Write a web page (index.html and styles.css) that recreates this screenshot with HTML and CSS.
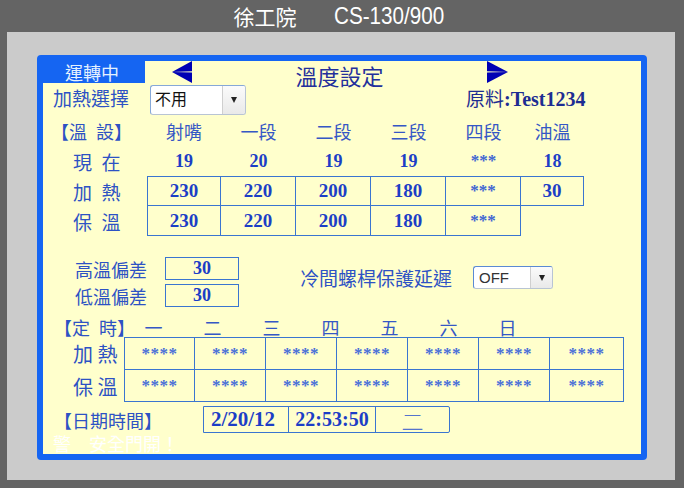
FILE: index.html
```html
<!DOCTYPE html>
<html lang="zh-Hant">
<head>
<meta charset="utf-8">
<title>溫度設定</title>
<link rel="stylesheet" href="styles.css">
</head>
<body>
<header class="titlebar"><span class="t-cn">徐工院</span><span class="t-en">CS-130/900</span></header>
<div class="panel">
  <div class="frame">
    <div class="toprow">
      <div class="tab">運轉中</div>
      <svg class="arrow arrow-left" viewBox="0 0 20 22" aria-hidden="true"><polygon points="0,11 20,0 20,10.2"/><polygon points="0,11 20,11.6 20,22"/></svg>
      <div class="pagetitle">溫度設定</div>
      <svg class="arrow arrow-right" viewBox="0 0 21 22" aria-hidden="true"><polygon points="21,11 0,0 0,10.2"/><polygon points="21,11 0,11.6 0,22"/></svg>
    </div>
    <div class="selrow">
      <div class="sellabel">加熱選擇</div>
      <div class="select sel-heat"><span class="sel-val">不用</span><span class="sel-btn"></span></div>
      <div class="material"><span class="mat-label">原料</span><span class="mat-val">:Test1234</span></div>
    </div>
    <div class="temp-grid">
      <div class="sec-label">【溫&ensp;設】</div>
      <div class="colhead">射嘴</div>
      <div class="colhead">一段</div>
      <div class="colhead">二段</div>
      <div class="colhead">三段</div>
      <div class="colhead">四段</div>
      <div class="colhead">油溫</div>

      <div class="rowlabel">現&ensp;在</div>
      <div class="cur">19</div>
      <div class="cur">20</div>
      <div class="cur">19</div>
      <div class="cur">19</div>
      <div class="cur stars">***</div>
      <div class="cur">18</div>

      <div class="rowlabel">加&ensp;熱</div>
      <div class="cell top first">230</div>
      <div class="cell top">220</div>
      <div class="cell top">200</div>
      <div class="cell top">180</div>
      <div class="cell top stars">***</div>
      <div class="cell top">30</div>

      <div class="rowlabel">保&ensp;溫</div>
      <div class="cell first">230</div>
      <div class="cell">220</div>
      <div class="cell">200</div>
      <div class="cell">180</div>
      <div class="cell stars">***</div>
    </div>

    <div class="dev">
      <div class="dev-left">
        <div class="dev-row"><span class="dev-label">高溫偏差</span><span class="dev-box">30</span></div>
        <div class="dev-row"><span class="dev-label">低溫偏差</span><span class="dev-box">30</span></div>
      </div>
      <div class="dev-right">
        <span class="cold-label">冷間螺桿保護延遲</span>
        <div class="select sel-off"><span class="sel-val">OFF</span><span class="sel-btn"></span></div>
      </div>
    </div>

    <div class="timer-head">
      <div class="sec-label">【定&ensp;時】</div>
      <div class="day">一</div>
      <div class="day">二</div>
      <div class="day">三</div>
      <div class="day">四</div>
      <div class="day">五</div>
      <div class="day">六</div>
      <div class="day">日</div>
    </div>
    <div class="timer-grid">
      <div class="trowlabel">加 熱</div>
      <div class="cell top first tstars">****</div>
      <div class="cell top tstars">****</div>
      <div class="cell top tstars">****</div>
      <div class="cell top tstars">****</div>
      <div class="cell top tstars">****</div>
      <div class="cell top tstars">****</div>
      <div class="cell top tstars">****</div>
      <div class="trowlabel">保 溫</div>
      <div class="cell first tstars">****</div>
      <div class="cell tstars">****</div>
      <div class="cell tstars">****</div>
      <div class="cell tstars">****</div>
      <div class="cell tstars">****</div>
      <div class="cell tstars">****</div>
      <div class="cell tstars">****</div>
    </div>

    <div class="date-row">
      <div class="sec-label date-label">【日期時間】</div>
      <div class="date-box">
        <span class="d d1">2/20/12</span>
        <span class="d d2">22:53:50</span>
        <span class="d d3">二</span>
      </div>
    </div>
    <div class="warn">警　安全門開！</div>
  </div>
</div>
</body>
</html>
```

FILE: styles.css
```css
* { box-sizing: border-box; }
html, body { margin: 0; padding: 0; }
body {
  width: 684px;
  height: 488px;
  overflow: hidden;
  background: #646464;
  font-family: "Noto Sans CJK TC", "Noto Sans", sans-serif;
}

.titlebar {
  height: 32px;
  display: flex;
  justify-content: center;
  align-items: center;
  gap: 38px;
  color: #ffffff;
  padding-left: 12px;
}
.t-cn { font-size: 21px; line-height: 32px; }
.t-en {
  display: inline-block;
  font-family: "Liberation Sans", sans-serif;
  font-size: 24px;
  line-height: 32px;
  transform: scaleX(0.86);
  transform-origin: left center;
}

.panel {
  margin: 0 9px 0 7px;
  height: 448px;
  background: #cbcbcb;
  padding: 23px 0 0 30px;
}
.frame {
  width: 610px;
  height: 405px;
  border: 6px solid #1565f2;
  border-radius: 4px;
  background: #ffffcc;
}

.toprow { display: flex; height: 22px; }
.tab {
  width: 102px;
  height: 22px;
  background: #1565f2;
  color: #e4f1ff;
  font-size: 18px;
  line-height: 22px;
  text-align: center;
  padding-right: 4px;
}
.arrow { height: 22px; fill: #0000b4; flex: none; }
.arrow-left { width: 20px; margin-left: 27px; }
.arrow-right { width: 21px; }
.pagetitle {
  width: 295px;
  height: 22px;
  text-align: center;
  font-size: 22px;
  line-height: 22px;
  padding-top: 3px;
  color: #24309c;
  white-space: nowrap;
}

.selrow { display: flex; height: 33px; }
.sellabel {
  width: 107px;
  padding-left: 10px;
  font-size: 19px;
  line-height: 28px;
  margin-top: 1px;
  color: #2d52c4;
}
.select {
  display: flex;
  background: #ffffff;
  border: 1px solid #86a8d8;
  border-right-color: #b8c4d4;
  border-bottom-color: #b8c4d4;
  border-radius: 3px;
  overflow: hidden;
}
.sel-heat { width: 96px; height: 30px; margin-top: 2px; }
.sel-val {
  flex: 1;
  color: #111111;
  padding-left: 4px;
}
.sel-heat .sel-val { font-size: 16px; line-height: 24px; }
.sel-btn {
  width: 23px;
  border-left: 1px solid #cfcfcf;
  background: linear-gradient(#fbfbfb, #e9e9e9);
  display: flex;
  align-items: center;
  justify-content: center;
}
.sel-btn::after {
  content: "";
  border-left: 3.5px solid transparent;
  border-right: 3.5px solid transparent;
  border-top: 6px solid #222222;
}
.material {
  margin-left: 220px;
  margin-top: 1px;
  line-height: 28px;
  color: #1e2d92;
  white-space: nowrap;
}
.mat-label { font-size: 19px; }
.mat-val {
  font-family: "Liberation Serif", serif;
  font-weight: bold;
  font-size: 20px;
}

.temp-grid {
  display: grid;
  grid-template-columns: 104px 74px 75px 75px 75px 75px 63px;
  grid-template-rows: 30px 30px 30px 30px;
}
.temp-grid > div {
  display: flex;
  align-items: center;
  justify-content: center;
}
.temp-grid > .sec-label { justify-content: flex-start; }
.sec-label {
  font-size: 18px;
  color: #2d52c4;
  white-space: nowrap;
  padding-left: 8px;
}
.colhead { font-size: 18px; color: #3557c5; }
.temp-grid > .rowlabel {
  justify-content: flex-start;
  padding-left: 30px;
  font-size: 19px;
  color: #2d52c4;
}
.cur, .cell, .dev-box, .d {
  font-family: "Liberation Serif", serif;
  font-weight: bold;
  color: #1c3ec6;
}
.cur { font-size: 18px; }
.temp-grid .cell { font-size: 19px; }
.cell {
  border-right: 1px solid #3a75d0;
  border-bottom: 1px solid #3a75d0;
}
.cell.top { border-top: 1px solid #3a75d0; }
.cell.first { border-left: 1px solid #3a75d0; }
.temp-grid .stars { font-size: 17px; color: #4166d2; }

.dev { display: flex; margin-top: 21px; }
.dev-left {
  padding-left: 32px;
  display: flex;
  flex-direction: column;
  gap: 4px;
}
.dev-row { display: flex; align-items: center; height: 23px; }
.dev-label { width: 90px; font-size: 18px; color: #2d52c4; }
.dev-box {
  width: 74px;
  height: 23px;
  border: 1px solid #3a75d0;
  display: flex;
  align-items: center;
  justify-content: center;
  font-size: 18px;
}
.dev-right {
  display: flex;
  align-items: center;
  align-self: flex-start;
  margin-left: 61px;
  margin-top: 9px;
  height: 23px;
}
.cold-label { font-size: 19px; color: #2d52c4; white-space: nowrap; }
.sel-off { width: 80px; height: 23px; margin-left: 21px; border-color: #5b8ad4; border-right-color: #b8c4d4; border-bottom-color: #b8c4d4; }
.sel-off .sel-val {
  font-family: "Liberation Sans", sans-serif;
  font-size: 15px;
  line-height: 21px;
  padding-left: 5px;
  color: #333333;
}
.sel-off .sel-btn { width: 22px; }

.timer-head {
  display: flex;
  align-items: center;
  margin-top: 9px;
  height: 21px;
}
.timer-head .sec-label { width: 81px; padding-left: 11px; }
.day {
  width: 59px;
  text-align: center;
  font-size: 18px;
  color: #3557c5;
}

.timer-grid {
  display: grid;
  grid-template-columns: 81px 71px 71px 71px 71px 71px 71px 74px;
  grid-template-rows: 33px 32px;
}
.timer-grid > div {
  display: flex;
  align-items: center;
  justify-content: center;
}
.timer-grid > .trowlabel {
  justify-content: flex-start;
  padding-left: 30px;
  font-size: 20px;
  color: #2d52c4;
  white-space: nowrap;
}
.tstars { font-size: 17px; color: #4a6fd8; letter-spacing: 0.5px; }

.date-row {
  display: flex;
  align-items: center;
  margin-top: 4px;
  height: 27px;
}
.date-label { width: 160px; padding-left: 11px; }
.date-box {
  display: flex;
  height: 27px;
  border: 1px solid #3a75d0;
  border-radius: 0 2px 2px 0;
}
.d {
  display: flex;
  align-items: center;
  justify-content: center;
  font-size: 20px;
}
.d1 { width: 84px; font-size: 21px; padding-right: 6px; }
.d2 { width: 87px; border-left: 1px solid #3a75d0; }
.d3 {
  width: 74px;
  border-left: 1px solid #3a75d0;
  font-family: "Noto Sans CJK TC", sans-serif;
  font-weight: 300;
  font-size: 22px;
  color: #5574cc;
}

.warn {
  color: #ffffff;
  font-size: 18px;
  line-height: 18px;
  padding-left: 10px;
  margin-top: 1px;
}
```
